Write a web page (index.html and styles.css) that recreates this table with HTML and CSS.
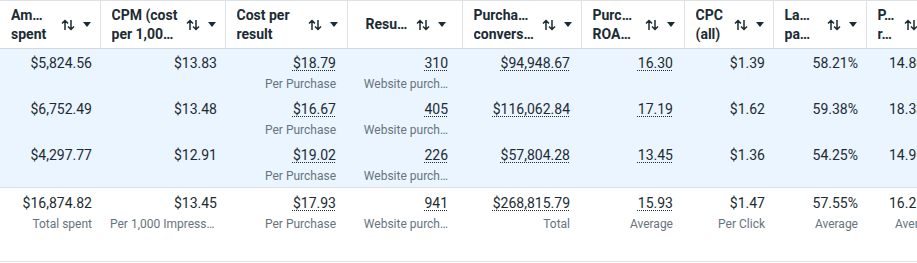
FILE: index.html
```html
<!DOCTYPE html>
<html>
<head>
<meta charset="utf-8">
<link rel="stylesheet" href="styles.css">
</head>
<body>
<div class="wrap">
<table class="grid">
  <colgroup>
    <col class="c1"><col class="c2"><col class="c3"><col class="c4"><col class="c5"><col class="c6"><col class="c7"><col class="c8"><col class="c9">
  </colgroup>
  <thead>
    <tr>
      <th><div class="hd"><span class="lbl">Am…<br>spent</span><span class="ic"><svg class="sort" viewBox="0 0 14 12"><path d="M4 11V2M1 4.5L4 1.5L7 4.5M10 1v9M7 7.5L10 10.5L13 7.5"/></svg><svg class="caret" viewBox="0 0 8 5"><path d="M0 0h8L4 5z"/></svg></span></div></th>
      <th><div class="hd"><span class="lbl">CPM (cost<br>per 1,00…</span><span class="ic"><svg class="sort" viewBox="0 0 14 12"><path d="M4 11V2M1 4.5L4 1.5L7 4.5M10 1v9M7 7.5L10 10.5L13 7.5"/></svg><svg class="caret" viewBox="0 0 8 5"><path d="M0 0h8L4 5z"/></svg></span></div></th>
      <th><div class="hd"><span class="lbl">Cost per<br>result</span><span class="ic"><svg class="sort" viewBox="0 0 14 12"><path d="M4 11V2M1 4.5L4 1.5L7 4.5M10 1v9M7 7.5L10 10.5L13 7.5"/></svg><svg class="caret" viewBox="0 0 8 5"><path d="M0 0h8L4 5z"/></svg></span></div></th>
      <th><div class="hd right"><span class="lbl">Resu…</span><span class="ic"><svg class="sort" viewBox="0 0 14 12"><path d="M4 11V2M1 4.5L4 1.5L7 4.5M10 1v9M7 7.5L10 10.5L13 7.5"/></svg><svg class="caret" viewBox="0 0 8 5"><path d="M0 0h8L4 5z"/></svg></span></div></th>
      <th><div class="hd"><span class="lbl">Purcha…<br>convers…</span><span class="ic"><svg class="sort" viewBox="0 0 14 12"><path d="M4 11V2M1 4.5L4 1.5L7 4.5M10 1v9M7 7.5L10 10.5L13 7.5"/></svg><svg class="caret" viewBox="0 0 8 5"><path d="M0 0h8L4 5z"/></svg></span></div></th>
      <th><div class="hd"><span class="lbl">Purc…<br>ROA…</span><span class="ic"><svg class="sort" viewBox="0 0 14 12"><path d="M4 11V2M1 4.5L4 1.5L7 4.5M10 1v9M7 7.5L10 10.5L13 7.5"/></svg><svg class="caret" viewBox="0 0 8 5"><path d="M0 0h8L4 5z"/></svg></span></div></th>
      <th><div class="hd"><span class="lbl">CPC<br>(all)</span><span class="ic"><svg class="sort" viewBox="0 0 14 12"><path d="M4 11V2M1 4.5L4 1.5L7 4.5M10 1v9M7 7.5L10 10.5L13 7.5"/></svg><svg class="caret" viewBox="0 0 8 5"><path d="M0 0h8L4 5z"/></svg></span></div></th>
      <th><div class="hd"><span class="lbl">La…<br>pa…</span><span class="ic"><svg class="sort" viewBox="0 0 14 12"><path d="M4 11V2M1 4.5L4 1.5L7 4.5M10 1v9M7 7.5L10 10.5L13 7.5"/></svg><svg class="caret" viewBox="0 0 8 5"><path d="M0 0h8L4 5z"/></svg></span></div></th>
      <th><div class="hd narrow"><span class="lbl">P…<br>r…</span><span class="ic"><svg class="sort" viewBox="0 0 14 12"><path d="M4 11V2M1 4.5L4 1.5L7 4.5M10 1v9M7 7.5L10 10.5L13 7.5"/></svg><svg class="caret" viewBox="0 0 8 5"><path d="M0 0h8L4 5z"/></svg></span></div></th>
    </tr>
  </thead>
  <tbody>
    <tr>
      <td><div class="v">$5,824.56</div></td>
      <td><div class="v">$13.83</div></td>
      <td class="pu"><div class="v"><span class="dot">$18.79</span></div><div class="s">Per Purchase</div></td>
      <td class="pr"><div class="v"><span class="dot">310</span></div><div class="s">Website purch…</div></td>
      <td class="pu"><div class="v"><span class="dot">$94,948.67</span></div></td>
      <td class="pu"><div class="v"><span class="dot">16.30</span></div></td>
      <td><div class="v">$1.39</div></td>
      <td><div class="v">58.21%</div></td>
      <td class="last"><div class="v">14.80</div></td>
    </tr>
    <tr>
      <td><div class="v">$6,752.49</div></td>
      <td><div class="v">$13.48</div></td>
      <td class="pu"><div class="v"><span class="dot">$16.67</span></div><div class="s">Per Purchase</div></td>
      <td class="pr"><div class="v"><span class="dot">405</span></div><div class="s">Website purch…</div></td>
      <td class="pu"><div class="v"><span class="dot">$116,062.84</span></div></td>
      <td class="pu"><div class="v"><span class="dot">17.19</span></div></td>
      <td><div class="v">$1.62</div></td>
      <td><div class="v">59.38%</div></td>
      <td class="last"><div class="v">18.33</div></td>
    </tr>
    <tr>
      <td><div class="v">$4,297.77</div></td>
      <td><div class="v">$12.91</div></td>
      <td class="pu"><div class="v"><span class="dot">$19.02</span></div><div class="s">Per Purchase</div></td>
      <td class="pr"><div class="v"><span class="dot">226</span></div><div class="s">Website purch…</div></td>
      <td class="pu"><div class="v"><span class="dot">$57,804.28</span></div></td>
      <td class="pu"><div class="v"><span class="dot">13.45</span></div></td>
      <td><div class="v">$1.36</div></td>
      <td><div class="v">54.25%</div></td>
      <td class="last"><div class="v">14.96</div></td>
    </tr>
  </tbody>
  <tfoot>
    <tr>
      <td><div class="v">$16,874.82</div><div class="s">Total spent</div></td>
      <td><div class="v">$13.45</div><div class="s left">Per 1,000 Impress…</div></td>
      <td class="pu"><div class="v"><span class="dot">$17.93</span></div><div class="s">Per Purchase</div></td>
      <td class="pr"><div class="v"><span class="dot">941</span></div><div class="s">Website purch…</div></td>
      <td class="pu"><div class="v"><span class="dot">$268,815.79</span></div><div class="s">Total</div></td>
      <td class="pu"><div class="v"><span class="dot">15.93</span></div><div class="s">Average</div></td>
      <td><div class="v">$1.47</div><div class="s">Per Click</div></td>
      <td><div class="v">57.55%</div><div class="s">Average</div></td>
      <td class="last"><div class="v">16.21</div><div class="s sub">Average</div></td>
    </tr>
  </tfoot>
</table>
</div>
</body>
</html>
```

FILE: styles.css
```css
html, body {
  margin: 0;
  padding: 0;
  background: #ffffff;
}
body {
  font-family: Roboto, "Noto Sans", "Liberation Sans", sans-serif;
  color: #1c2b33;
}
.wrap {
  width: 917px;
  height: 263px;
  overflow: hidden;
}
.grid {
  border-collapse: collapse;
  table-layout: fixed;
  width: 966px;
}
.c1 { width: 100px; }
.c2 { width: 125px; }
.c3 { width: 122px; }
.c4 { width: 115px; }
.c5 { width: 119px; }
.c6 { width: 103px; }
.c7 { width: 89px; }
.c8 { width: 93px; }
.c9 { width: 100px; }

thead th {
  height: 47px;
  padding: 0;
  border-top: 1px solid #dde1e5;
  border-bottom: 1px solid #d3d8dd;
  border-right: 1px solid #dde1e5;
  background: #ffffff;
  text-align: left;
  vertical-align: middle;
}
.hd {
  display: flex;
  align-items: center;
  padding: 0 9px 0 11px;
  gap: 6px;
}
.hd.right { padding-right: 16px; gap: 8px; }
.hd.narrow .lbl { flex: none; width: 20px; }
.lbl {
  flex: 1;
  font-size: 14px;
  font-weight: 700;
  line-height: 19px;
  white-space: nowrap;
  overflow: hidden;
  color: #1c2b33;
}
.hd.right .lbl { text-align: right; }
.ic {
  display: flex;
  align-items: center;
  gap: 8px;
  flex: none;
}
.sort {
  width: 14px;
  height: 12px;
  fill: none;
  stroke: #1c2b33;
  stroke-width: 1.5;
}
.caret {
  width: 8px;
  height: 5px;
  fill: #1c2b33;
}

td {
  padding: 4px 8px 1px 8px;
  text-align: right;
  vertical-align: top;
  white-space: nowrap;
  overflow: hidden;
}
tbody td {
  height: 41px;
  background: #ebf5ff;
}
tbody tr:last-child td { border-bottom: 1px solid #dde1e5; }
tfoot td {
  height: 67px;
  padding-top: 5px;
  border-bottom: 1px solid #dde1e5;
}
td.pu { padding-right: 11px; }
td.pr { padding-right: 14px; }
td.last { text-align: left; padding-left: 23px; }

.v {
  font-size: 14px;
  line-height: 20px;
}
.s {
  font-size: 12px;
  line-height: 20px;
  margin-top: 1px;
  color: #67737e;
}
.s.left { text-align: left; padding-left: 2px; }
.s.sub { padding-left: 6px; }
.dot {
  text-decoration: underline dotted #1c2b33;
  text-underline-offset: 2px;
  text-decoration-thickness: 1px;
}
```
